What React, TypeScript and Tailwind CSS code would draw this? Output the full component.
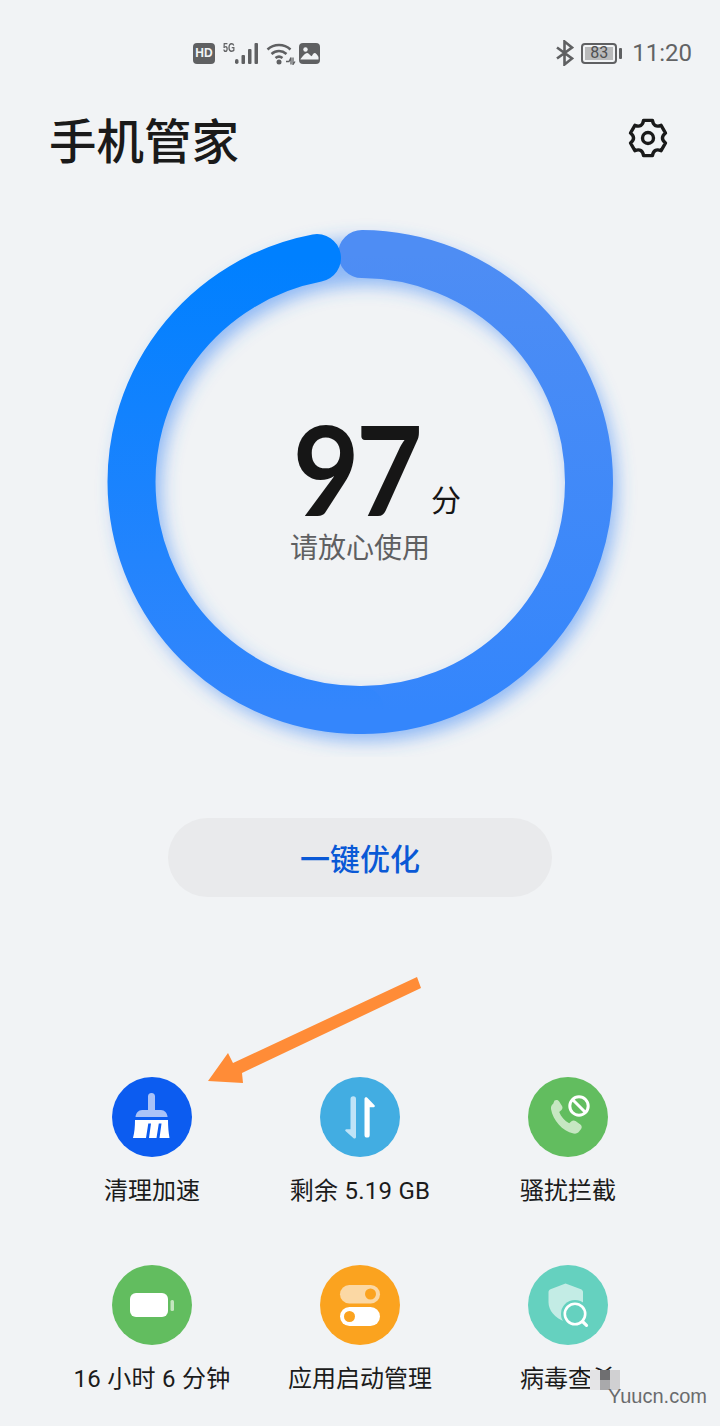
import type { ReactNode } from "react";

const CJK = "font-['Roboto','Noto_Sans_CJK_SC',sans-serif]";

// scalloped outline of the settings gear, six lobes with a flat top
function gearPath() {
  const at = (deg: number, r: number) => {
    const a = (deg * Math.PI) / 180;
    return `${(20 + r * Math.cos(a)).toFixed(2)} ${(20 + r * Math.sin(a)).toFixed(2)}`;
  };
  let d = `M${at(-104, 18.2)}`;
  for (let k = 0; k < 6; k++) {
    const t = -90 + 60 * k;
    d += `L${at(t + 14, 18.2)}Q${at(t + 30, 11.4)} ${at(t + 46, 18.2)}`;
  }
  return d + "Z";
}

function Ring() {
  return (
    <svg width="720" height="550" viewBox="0 207 720 550" fill="none" className="block">
      <defs>
        <linearGradient id="ringRight" gradientUnits="userSpaceOnUse" x1="0" y1="254" x2="0" y2="710">
          <stop offset="0" stopColor="#4e8df4" />
          <stop offset="1" stopColor="#3486fc" />
        </linearGradient>
        <linearGradient id="ringLeft" gradientUnits="userSpaceOnUse" x1="0" y1="710" x2="0" y2="258">
          <stop offset="0" stopColor="#3486fc" />
          <stop offset="1" stopColor="#0080ff" />
        </linearGradient>
        <filter id="ringGlow" x="-20%" y="-20%" width="140%" height="140%">
          <feGaussianBlur stdDeviation="9" />
        </filter>
      </defs>
      <circle cx="366" cy="490" r="228" stroke="#3b86f6" strokeOpacity="0.55" strokeWidth="46" filter="url(#ringGlow)" />
      <path d="M362 254A228 228 0 0 1 360 710" stroke="url(#ringRight)" strokeWidth="48" strokeLinecap="round" />
      <path d="M360 710A228 228 0 0 1 317 258" stroke="url(#ringLeft)" strokeWidth="48" strokeLinecap="round" />
    </svg>
  );
}

function BroomIcon() {
  return (
    <svg width="80" height="80" viewBox="0 0 80 80" fill="none">
      <path d="M36 19.500a3.500 3.500 0 0 1 7 0V33h6c3.600 0 6.200 3 6.600 7H23.500c.4-4 3-7 6.600-7H36z" fill="#a9c2f8" />
      <path d="M23 43H56c0 6.500 .5 12.500 1.500 18H47.500l2-14.500h-2.700L44.500 61H37l2-14.500h-2.700L34 61H21c1.500-5.500 2-11.500 2-18z" fill="#fff" />
    </svg>
  );
}

function TransferIcon() {
  return (
    <svg width="80" height="80" viewBox="0 0 80 80" fill="none">
      <path d="M30.500 22a2.500 2.500 0 0 1 5.500 0v38c0 1.500-1.500 2-2.700 1L25.500 54c-.6-.7-.2-1.800 .8-1.800h4.200z" fill="#bfe3f7" />
      <path d="M44.500 22c0-1.500 1.600-2.200 2.800-1.200l7.200 7.400c.7 .7 .3 2-.8 2h-4V58a2.600 2.600 0 0 1-5.200 0z" fill="#fff" />
    </svg>
  );
}

function CallBlockIcon() {
  return (
    <svg width="80" height="80" viewBox="0 0 80 80" fill="none">
      <path d="M26.500 23.500c1.600-1 3.500-.7 4.500 .8l3 4.800c.8 1.300 .6 2.900-.5 3.900l-2.300 2c1.800 4.700 5.500 8.800 10 11.300l2.300-2.100c1.100-1 2.800-1.100 4-.2l4.900 3.500c1.500 1.100 1.800 3.100 .7 4.500l-2 2.600c-1.300 1.700-3.500 2.500-5.600 2-11.200-2.800-20.600-13.300-22.500-24.700-.3-2 .5-4 2.200-5.200z" fill="#c6e7c2" />
      <circle cx="51" cy="29" r="9.200" stroke="#fff" strokeWidth="3" />
      <path d="M44.500 22.500l13 13" stroke="#fff" strokeWidth="3" />
    </svg>
  );
}

function BatteryIcon() {
  return (
    <svg width="80" height="80" viewBox="0 0 80 80" fill="none">
      <rect x="18" y="28" width="38" height="24" rx="6" fill="#fff" />
      <rect x="58.500" y="35" width="3.500" height="11" rx="1.500" fill="#c4e6bf" />
    </svg>
  );
}

function ToggleIcon() {
  return (
    <svg width="80" height="80" viewBox="0 0 80 80" fill="none">
      <rect x="20" y="20" width="40" height="18.500" rx="9.250" fill="#fbd8a4" />
      <circle cx="50.500" cy="29" r="5.500" fill="#fba31f" />
      <rect x="20" y="42" width="40" height="19" rx="9.500" fill="#fff" />
      <circle cx="29.500" cy="51.500" r="5.500" fill="#fba31f" />
    </svg>
  );
}

function ShieldIcon() {
  return (
    <svg width="80" height="80" viewBox="0 0 80 80" fill="none">
      <path d="M37.500 18.500l15.500 5.700c1.200 .5 2 1.600 2 2.900V37c0 8.800-6.600 16-17.500 20C27 53 20.500 45.800 20.500 37V27.100c0-1.300 .8-2.400 2-2.900z" fill="#c3ece5" />
      <circle cx="47" cy="49" r="14" fill="#65d1bf" />
      <circle cx="47" cy="49" r="10.200" stroke="#fff" strokeWidth="2.600" />
      <path d="M54.500 56.500l4 3.800" stroke="#fff" strokeWidth="3.200" strokeLinecap="round" />
    </svg>
  );
}

function Tool({ color, label, icon, wide }: { color: string; label: string; icon: ReactNode; wide?: boolean }) {
  return (
    <div className="flex h-[188px] flex-col items-center">
      <div className={`h-20 w-20 rounded-full ${color}`}>{icon}</div>
      <span className={`mt-[16px] whitespace-nowrap text-[24px] leading-[36px] text-[#1b1b1b] ${wide ? "tracking-[0.25px]" : ""}`}>{label}</span>
    </div>
  );
}

function StatusBar() {
  return (
    <div className="flex h-[34px] items-center text-[#626365]">
      <div className="ml-[193px] flex items-center">
        <span className="flex h-[21px] w-[22px] items-center justify-center rounded-[4px] bg-[#5f6062] font-['Liberation_Sans',sans-serif] text-[12px] font-bold text-[#f1f3f5]">
          HD
        </span>
        <div className="relative ml-[8px] h-[24px] w-[36px]">
          <span className="absolute left-0 top-[1px] origin-left scale-x-75 font-['Liberation_Sans',sans-serif] text-[12px] font-bold leading-none">5G</span>
          <svg width="26" height="24" viewBox="0 0 26 24" className="absolute left-[10px] top-0" fill="#5f6062">
            <rect x="2" y="18" width="3.500" height="5" rx="1.750" />
            <rect x="8.500" y="14" width="3.500" height="9" rx="1" />
            <rect x="15" y="8" width="3.500" height="15" rx="1" />
            <rect x="21.500" y="2" width="3.500" height="21" rx="1" />
          </svg>
        </div>
        <svg width="30" height="24" viewBox="0 0 30 24" fill="none" className="ml-[7px]">
          <path d="M1.500 8.500C8 2.500 18 2.500 24.500 8.500M5.500 13C10 9 16 9 20.500 13M9.500 17c2.500-2 4.500-2 7 0" stroke="#5f6062" strokeWidth="2.500" />
          <circle cx="13" cy="21" r="2.500" fill="#5f6062" />
          <path d="M20 20.500h3l2-4v7M27 16.500v7l2-3" stroke="#5f6062" strokeWidth="1.300" />
        </svg>
        <svg width="21" height="21" viewBox="0 0 21 21" fill="none" className="ml-[3px]">
          <rect width="21" height="21" rx="4" fill="#5f6062" />
          <circle cx="6.500" cy="6.500" r="2.200" fill="#f1f3f5" />
          <path d="M1.500 16c3-4 5-6 6.500-6s3 2 4 3 2-3 3.500-3 3 2 4 4v2.500H1.500z" fill="#f1f3f5" />
        </svg>
      </div>
      <div className="ml-auto flex items-center pr-[28px]">
        <svg width="19" height="26" viewBox="0 0 19 26" fill="none" stroke="#5f6062" strokeWidth="2.600">
          <path d="M2 7.500l15 11-7.500 6V1.500l7.500 6-15 11" />
        </svg>
        <div className="ml-[7px] flex h-[21px] w-[36px] items-center rounded-[4px] border-2 border-[#5f6062] p-[2px]">
          <span className="flex h-full w-[28px] items-center justify-center bg-[#b9babb] font-['Roboto',sans-serif] text-[16px] text-[#4e4f51]">83</span>
        </div>
        <span className="ml-[2px] h-[11px] w-[3px] rounded-[1px] bg-[#5f6062]" />
        <span className="ml-[10px] font-['Roboto',sans-serif] text-[24px] leading-none">11:20</span>
      </div>
    </div>
  );
}

export default function App() {
  return (
    <div className={`relative h-[1426px] w-[720px] overflow-hidden bg-[#f1f3f5] pt-[36px] ${CJK}`}>
      <StatusBar />

      <header className="mt-[40px] flex h-[62px] items-center justify-between pl-[49px] pr-[52px]">
        <h1 className="mt-[5px] text-[47.500px] font-medium leading-none text-[#1a1a1a]">手机管家</h1>
        <svg width="40" height="40" viewBox="0 0 40 40" fill="none" stroke="#1a1a1a" strokeWidth="3.400" strokeLinejoin="round" className="mt-[-6px]">
          <path d={gearPath()} />
          <circle cx="20" cy="20" r="5.500" />
        </svg>
      </header>

      <section className="relative mt-[35px] h-[550px]">
        <Ring />
        <div className="absolute inset-0 flex flex-col items-center">
          <div className="relative ml-[-8px] mt-[211px] h-[100px] text-[#161616]">
            <span className="inline-block scale-x-[0.93] font-['Lato',sans-serif] text-[124px] font-bold leading-[100px] tracking-[-4px]">97</span>
            <span className={`absolute left-[143px] top-[63px] text-[30px] font-normal leading-[40px] ${CJK}`}>分</span>
          </div>
          <span className="mt-[11px] text-[28px] leading-[40px] text-[#5f6062]">请放心使用</span>
        </div>
      </section>

      <div className="mt-[61px] flex justify-center">
        <button type="button" className="h-[79px] w-[384px] rounded-full bg-[#e9eaec] pt-[3px] text-[30px] font-medium text-[#0a59d6]">
          一键优化
        </button>
      </div>

      <main className="mt-[180px] grid grid-cols-[208px_208px_208px] px-[48px]">
        <Tool color="bg-[#0c5cf0]" label="清理加速" icon={<BroomIcon />} />
        <Tool color="bg-[#42ade2]" label="剩余 5.19 GB" icon={<TransferIcon />} wide />
        <Tool color="bg-[#62bd5f]" label="骚扰拦截" icon={<CallBlockIcon />} />
        <Tool color="bg-[#62bd5f]" label="16 小时 6 分钟" icon={<BatteryIcon />} wide />
        <Tool color="bg-[#fba31f]" label="应用启动管理" icon={<ToggleIcon />} />
        <Tool color="bg-[#65d1bf]" label="病毒查杀" icon={<ShieldIcon />} />
      </main>

      {/* annotation arrow on top of the screenshot */}
      <svg width="720" height="1426" viewBox="0 0 720 1426" className="pointer-events-none absolute left-0 top-0">
        <polygon points="417,977 421,988 242,1073 243,1083 208,1081 228,1053 233,1063" fill="#ff8c37" />
      </svg>

      {/* watermark mosaic and site name */}
      <div className="absolute left-[590px] top-[1370px] grid grid-cols-[10px_10px_10px] grid-rows-[10px_10px]">
        <span className="bg-[#e3e3e5]" />
        <span className="bg-[#6f6f71]" />
        <span className="bg-[#d0d0d2]" />
        <span className="bg-[#e5e5e7]" />
        <span className="bg-[#a9a9ab]" />
        <span className="bg-[#d0d0d2]" />
      </div>
      <span className="absolute left-[608px] top-[1384px] font-['Liberation_Sans',sans-serif] text-[20px] leading-[24px] text-[#6a6b6d]">
        Yuucn.com
      </span>
    </div>
  );
}
